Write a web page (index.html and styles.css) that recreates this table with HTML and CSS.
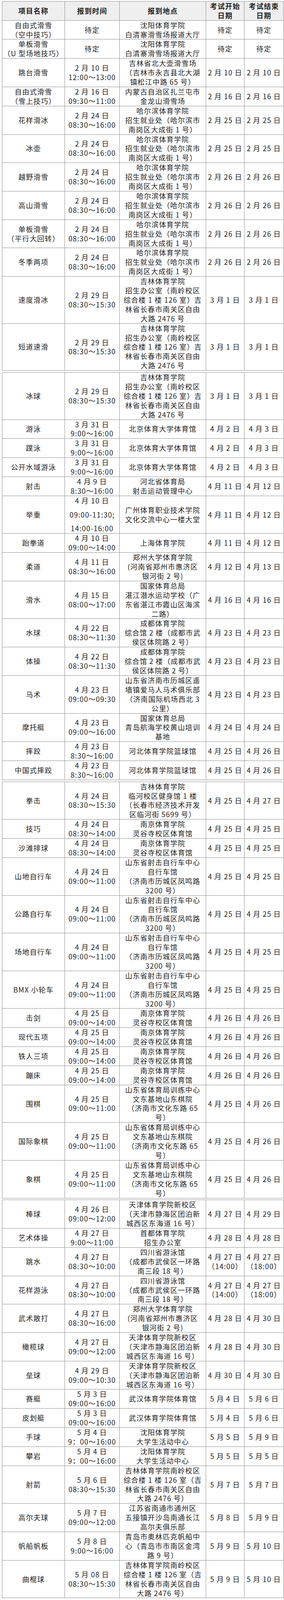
FILE: index.html
```html
<!DOCTYPE html>
<html lang="zh-CN">
<head>
<meta charset="utf-8">
<title>考试安排</title>
<link rel="stylesheet" href="styles.css">
</head>
<body>
<div class="sheet">

<table class="t">
<colgroup><col class="c1"><col class="c2"><col class="c3"><col class="c4"><col class="c5"></colgroup>
<tr class="head"><th>项目名称</th><th>报到时间</th><th>报到地点</th><th>考试开始<br>日期</th><th>考试结束<br>日期</th></tr>
<tr><td>自由式滑雪<br>（空中技巧）</td><td>待定</td><td>沈阳体育学院<br>白清寨滑雪场报道大厅</td><td>待定</td><td>待定</td></tr>
<tr><td>单板滑雪<br>（U 型场地技巧）</td><td>待定</td><td>沈阳体育学院<br>白清寨滑雪场报道大厅</td><td>待定</td><td>待定</td></tr>
<tr><td>跳台滑雪</td><td>2 月 10 日<br>12:00～13:00</td><td>吉林省北大壶滑雪场<br>（吉林市永吉县北大湖<br>镇松江中路 65 号）</td><td>2 月 10 日</td><td>2 月 10 日</td></tr>
<tr><td>自由式滑雪<br>（雪上技巧）</td><td>2 月 16 日<br>09:30～11:00</td><td>内蒙古自治区扎兰屯市<br>金龙山滑雪场</td><td>2 月 16 日</td><td>2 月 16 日</td></tr>
<tr><td>花样滑冰</td><td>2 月 24 日<br>08:30～16:00</td><td>哈尔滨体育学院<br>招生就业处（哈尔滨市<br>南岗区大成街 1 号）</td><td>2 月 25 日</td><td>2 月 25 日</td></tr>
<tr><td>冰壶</td><td>2 月 24 日<br>08:30～16:00</td><td>哈尔滨体育学院<br>招生就业处（哈尔滨市<br>南岗区大成街 1 号）</td><td>2 月 25 日</td><td>2 月 25 日</td></tr>
<tr><td>越野滑雪</td><td>2 月 24 日<br>08:30～16:00</td><td>哈尔滨体育学院<br>招生就业处（哈尔滨市<br>南岗区大成街 1 号）</td><td>2 月 26 日</td><td>2 月 26 日</td></tr>
<tr><td>高山滑雪</td><td>2 月 24 日<br>08:30～16:00</td><td>哈尔滨体育学院<br>招生就业处（哈尔滨市<br>南岗区大成街 1 号）</td><td>2 月 26 日</td><td>2 月 26 日</td></tr>
<tr><td>单板滑雪<br>（平行大回转）</td><td>2 月 24 日<br>08:30～16:00</td><td>哈尔滨体育学院<br>招生就业处（哈尔滨市<br>南岗区大成街 1 号）</td><td>2 月 26 日</td><td>2 月 26 日</td></tr>
<tr><td>冬季两项</td><td>2 月 24 日<br>08:30～16:00</td><td>哈尔滨体育学院<br>招生就业处（哈尔滨市<br>南岗区大成街 1 号）</td><td>2 月 26 日</td><td>2 月 26 日</td></tr>
<tr><td>速度滑冰</td><td>2 月 29 日<br>08:30～15:30</td><td>吉林体育学院<br>招生办公室（南岭校区<br>综合楼 1 楼 126 室）吉<br>林省长春市南关区自由<br>大路 2476 号</td><td>3 月 1 日</td><td>3 月 1 日</td></tr>
<tr><td>短道速滑</td><td>2 月 29 日<br>08:30～15:30</td><td>吉林体育学院<br>招生办公室（南岭校区<br>综合楼 1 楼 126 室）吉<br>林省长春市南关区自由<br>大路 2476 号</td><td>3 月 1 日</td><td>3 月 1 日</td></tr>
</table>

<table class="t">
<colgroup><col class="c1"><col class="c2"><col class="c3"><col class="c4"><col class="c5"></colgroup>
<tr><td>冰球</td><td>2 月 29 日<br>08:30～15:30</td><td>吉林体育学院<br>招生办公室（南岭校区<br>综合楼 1 楼 126 室）吉<br>林省长春市南关区自由<br>大路 2476 号</td><td>3 月 1 日</td><td>3 月 1 日</td></tr>
<tr><td>游泳</td><td>3 月 31 日<br>9:00～16:00</td><td>北京体育大学体育馆</td><td>4 月 2 日</td><td>4 月 3 日</td></tr>
<tr><td>蹼泳</td><td>3 月 31 日<br>9:00～16:00</td><td>北京体育大学体育馆</td><td>4 月 2 日</td><td>4 月 3 日</td></tr>
<tr><td>公开水域游泳</td><td>3 月 31 日<br>9:00～16:00</td><td>北京体育大学体育馆</td><td>4 月 2 日</td><td>4 月 3 日</td></tr>
<tr><td>射击</td><td>4 月 9 日<br>8:30～16:00</td><td>河北省体育局<br>射击运动管理中心</td><td>4 月 11 日</td><td>4 月 12 日</td></tr>
<tr><td>举重</td><td><div class="spaced"><span>4 月 10 日</span><span>09:00-11:30;</span><span>14:00-16:00</span></div></td><td>广州体育职业技术学院<br>文化交流中心一楼大堂</td><td>4 月 11 日</td><td>4 月 12 日</td></tr>
<tr><td>跆拳道</td><td>4 月 10 日<br>09:00～14:00</td><td>上海体育学院</td><td>4 月 11 日</td><td>4 月 12 日</td></tr>
<tr><td>柔道</td><td>4 月 11 日<br>08:30～16:00</td><td>郑州大学体育学院<br>(河南省郑州市惠济区<br>银河街 2 号)</td><td>4 月 12 日</td><td>4 月 13 日</td></tr>
<tr><td>滑水</td><td>4 月 15 日<br>08:00～17:00</td><td>国家体育总局<br>湛江潜水运动学校（广<br>东省湛江市霞山区海滨<br>二路）</td><td>4 月 16 日</td><td>4 月 16 日</td></tr>
<tr><td>水球</td><td>4 月 22 日<br>08:30～11:30</td><td>成都体育学院<br>综合馆 2 楼（成都市武<br>侯区体院路 2 号）</td><td>4 月 23 日</td><td>4 月 23 日</td></tr>
<tr><td>体操</td><td>4 月 22 日<br>08:30～11:30</td><td>成都体育学院<br>综合馆 2 楼（成都市武<br>侯区体院路 2 号）</td><td>4 月 23 日</td><td>4 月 23 日</td></tr>
<tr><td>马术</td><td>4 月 23 日<br>09:00～09:30</td><td>山东省济南市历城区遥<br>墙镇爱马人马术俱乐部<br>（济南国际机场西北 3<br>公里）</td><td>4 月 23 日</td><td>4 月 23 日</td></tr>
<tr><td>摩托艇</td><td>4 月 23 日<br>09:00～16:00</td><td>国家体育总局<br>青岛航海学校黄山培训<br>基地</td><td>4 月 24 日</td><td>4 月 24 日</td></tr>
<tr><td>摔跤</td><td>4 月 23 日<br>8:30～16:00</td><td>河北体育学院篮球馆</td><td>4 月 25 日</td><td>4 月 26 日</td></tr>
<tr><td>中国式摔跤</td><td>4 月 23 日<br>8:30～16:00</td><td>河北体育学院篮球馆</td><td>4 月 25 日</td><td>4 月 26 日</td></tr>
</table>

<table class="t">
<colgroup><col class="c1"><col class="c2"><col class="c3"><col class="c4"><col class="c5"></colgroup>
<tr><td>拳击</td><td>4 月 24 日<br>08:30～15:30</td><td>吉林体育学院<br>临河校区健身馆 1 楼<br>（长春市经济技术开发<br>区临河街 5699 号）</td><td>4 月 25 日</td><td>4 月 27 日</td></tr>
<tr><td>技巧</td><td>4 月 24 日<br>08:30～14:00</td><td>南京体育学院<br>灵谷寺校区体育馆</td><td>4 月 25 日</td><td>4 月 25 日</td></tr>
<tr><td>沙滩排球</td><td>4 月 24 日<br>08:30～14:00</td><td>南京体育学院<br>灵谷寺校区体育馆</td><td>4 月 25 日</td><td>4 月 25 日</td></tr>
<tr><td>山地自行车</td><td>4 月 24 日<br>09:00～11:00</td><td>山东省射击自行车中心<br>自行车馆<br>（济南市历城区凤鸣路<br>3200 号）</td><td>4 月 25 日</td><td>4 月 25 日</td></tr>
<tr><td>公路自行车</td><td>4 月 24 日<br>09:00～11:00</td><td>山东省射击自行车中心<br>自行车馆<br>（济南市历城区凤鸣路<br>3200 号）</td><td>4 月 25 日</td><td>4 月 25 日</td></tr>
<tr><td>场地自行车</td><td>4 月 24 日<br>09:00～11:00</td><td>山东省射击自行车中心<br>自行车馆<br>（济南市历城区凤鸣路<br>3200 号）</td><td>4 月 25 日</td><td>4 月 25 日</td></tr>
<tr><td>BMX 小轮车</td><td>4 月 24 日<br>09:00～11:00</td><td>山东省射击自行车中心<br>自行车馆<br>（济南市历城区凤鸣路<br>3200 号）</td><td>4 月 25 日</td><td>4 月 25 日</td></tr>
<tr><td>击剑</td><td>4 月 25 日<br>09:00～14:00</td><td>南京体育学院<br>灵谷寺校区体育馆</td><td>4 月 26 日</td><td>4 月 26 日</td></tr>
<tr><td>现代五项</td><td>4 月 25 日<br>09:00～14:00</td><td>南京体育学院<br>灵谷寺校区体育馆</td><td>4 月 26 日</td><td>4 月 26 日</td></tr>
<tr><td>铁人三项</td><td>4 月 25 日<br>09:00～14:00</td><td>南京体育学院<br>灵谷寺校区体育馆</td><td>4 月 26 日</td><td>4 月 26 日</td></tr>
<tr><td>蹦床</td><td>4 月 25 日<br>09:00～14:00</td><td>南京体育学院<br>灵谷寺校区体育馆</td><td>4 月 26 日</td><td>4 月 26 日</td></tr>
<tr><td>围棋</td><td>4 月 25 日<br>09:00～11:00</td><td>山东省体育局训练中心<br>文东基地山东棋院<br>（济南市文化东路 65<br>号）</td><td>4 月 25 日</td><td>4 月 26 日</td></tr>
<tr><td>国际象棋</td><td>4 月 25 日<br>09:00～11:00</td><td>山东省体育局训练中心<br>文东基地山东棋院<br>（济南市文化东路 65<br>号）</td><td>4 月 25 日</td><td>4 月 26 日</td></tr>
<tr><td>象棋</td><td>4 月 25 日<br>09:00～11:00</td><td>山东省体育局训练中心<br>文东基地山东棋院<br>（济南市文化东路 65<br>号）</td><td>4 月 25 日</td><td>4 月 26 日</td></tr>
</table>

<table class="t">
<colgroup><col class="c1"><col class="c2"><col class="c3"><col class="c4"><col class="c5"></colgroup>
<tr><td>棒球</td><td>4 月 26 日<br>09:00～12:00</td><td>天津体育学院新校区<br>（天津市静海区团泊新<br>城西区东海道 16 号）</td><td>4 月 27 日</td><td>4 月 29 日</td></tr>
<tr><td>艺术体操</td><td>4 月 27 日<br>9:00～11:00</td><td>首都体育学院<br>招生办公室</td><td>4 月 28 日</td><td>4 月 28 日</td></tr>
<tr><td>跳水</td><td>4 月 27 日<br>08:30～10:00</td><td>四川省游泳馆<br>（成都市武侯区一环路<br>南三段 18 号）</td><td>4 月 27 日<br>（14:00）</td><td>4 月 27 日<br>（18:00）</td></tr>
<tr><td>花样游泳</td><td>4 月 27 日<br>08:30～10:00</td><td>四川省游泳馆<br>（成都市武侯区一环路<br>南三段 18 号）</td><td>4 月 27 日<br>（14:00）</td><td>4 月 27 日<br>（18:00）</td></tr>
<tr><td>武术散打</td><td>4 月 27 日<br>08:30～16:00</td><td>郑州大学体育学院<br>(河南省郑州市惠济区<br>银河街 2 号)</td><td>4 月 28 日</td><td>4 月 30 日</td></tr>
<tr><td>橄榄球</td><td>4 月 27 日<br>09:00～12:00</td><td>天津体育学院新校区<br>（天津市静海区团泊新<br>城西区东海道 16 号）</td><td>4 月 28 日</td><td>4 月 30 日</td></tr>
<tr><td>垒球</td><td>4 月 29 日<br>09:00～10:30</td><td>天津体育学院新校区<br>（天津市静海区团泊新<br>城西区东海道 16 号）</td><td>4 月 30 日</td><td>4 月 30 日</td></tr>
<tr><td>赛艇</td><td>5 月 3 日<br>09:00～16:00</td><td>武汉体育学院体育馆</td><td>5 月 4 日</td><td>5 月 6 日</td></tr>
<tr><td>皮划艇</td><td>5 月 3 日<br>09:00～16:00</td><td>武汉体育学院体育馆</td><td>5 月 4 日</td><td>5 月 6 日</td></tr>
<tr><td>手球</td><td>5 月 4 日<br>9：00～16:00</td><td>沈阳体育学院<br>大学生活动中心</td><td>5 月 5 日</td><td>5 月 9 日</td></tr>
<tr><td>攀岩</td><td>5 月 4 日<br>9：00～16:00</td><td>沈阳体育学院<br>大学生活动中心</td><td>5 月 5 日</td><td>5 月 5 日</td></tr>
<tr><td>射箭</td><td>5 月 6 日<br>08:30～15:30</td><td>吉林体育学院南岭校区<br>综合楼 1 楼 126 室（吉<br>林省长春市南关区自由<br>大路 2476 号）</td><td>5 月 7 日</td><td>5 月 7 日</td></tr>
<tr><td>高尔夫球</td><td>5 月 7 日<br>09:00～12:00</td><td>江苏省南通市通州区<br>五接镇开沙岛南通长江<br>高尔夫俱乐部</td><td>5 月 8 日</td><td>5 月 9 日</td></tr>
<tr><td>帆船帆板</td><td>5 月 8 日<br>9:00～16:00</td><td>青岛市奥林匹克帆船中<br>心（青岛市市南区金湾<br>路 9 号）</td><td>5 月 9 日</td><td>5 月 10 日</td></tr>
<tr><td>曲棍球</td><td>5 月 08 日<br>08:30～15:30</td><td>吉林体育学院南岭校区<br>综合楼 1 楼 126 室（吉<br>林省长春市南关区自由<br>大路 2476 号）</td><td>5 月 9 日</td><td>5 月 10 日</td></tr>
</table>

</div>
</body>
</html>
```

FILE: styles.css
```css
html, body {
  margin: 0;
  padding: 0;
  background: #ffffff;
}

.sheet {
  padding: 2.85px 0 0 5px;
  font-family: "Noto Sans CJK SC", sans-serif;
  color: #222222;
}

.t {
  width: 719px;
  table-layout: fixed;
  border-collapse: collapse;
  margin: 0 0 3.8px 0;
}

.t:last-child {
  margin-bottom: 0;
}

.c1 { width: 160px; }
.c2 { width: 140px; }
.c3 { width: 221px; }
.c4 { width: 98px; }
.c5 { width: 100px; }

.t th,
.t td {
  border: 1px solid #8e8e8e;
  padding: 0;
  text-align: center;
  vertical-align: middle;
  font-size: 18px;
  line-height: 23.9px;
  letter-spacing: 1.2px;
  white-space: nowrap;
  font-weight: 400;
}

.head th {
  background: #efefef;
  font-weight: 700;
}

.spaced span {
  display: block;
  height: 23.9px;
}

.spaced span + span {
  margin-top: 11.95px;
}
```
